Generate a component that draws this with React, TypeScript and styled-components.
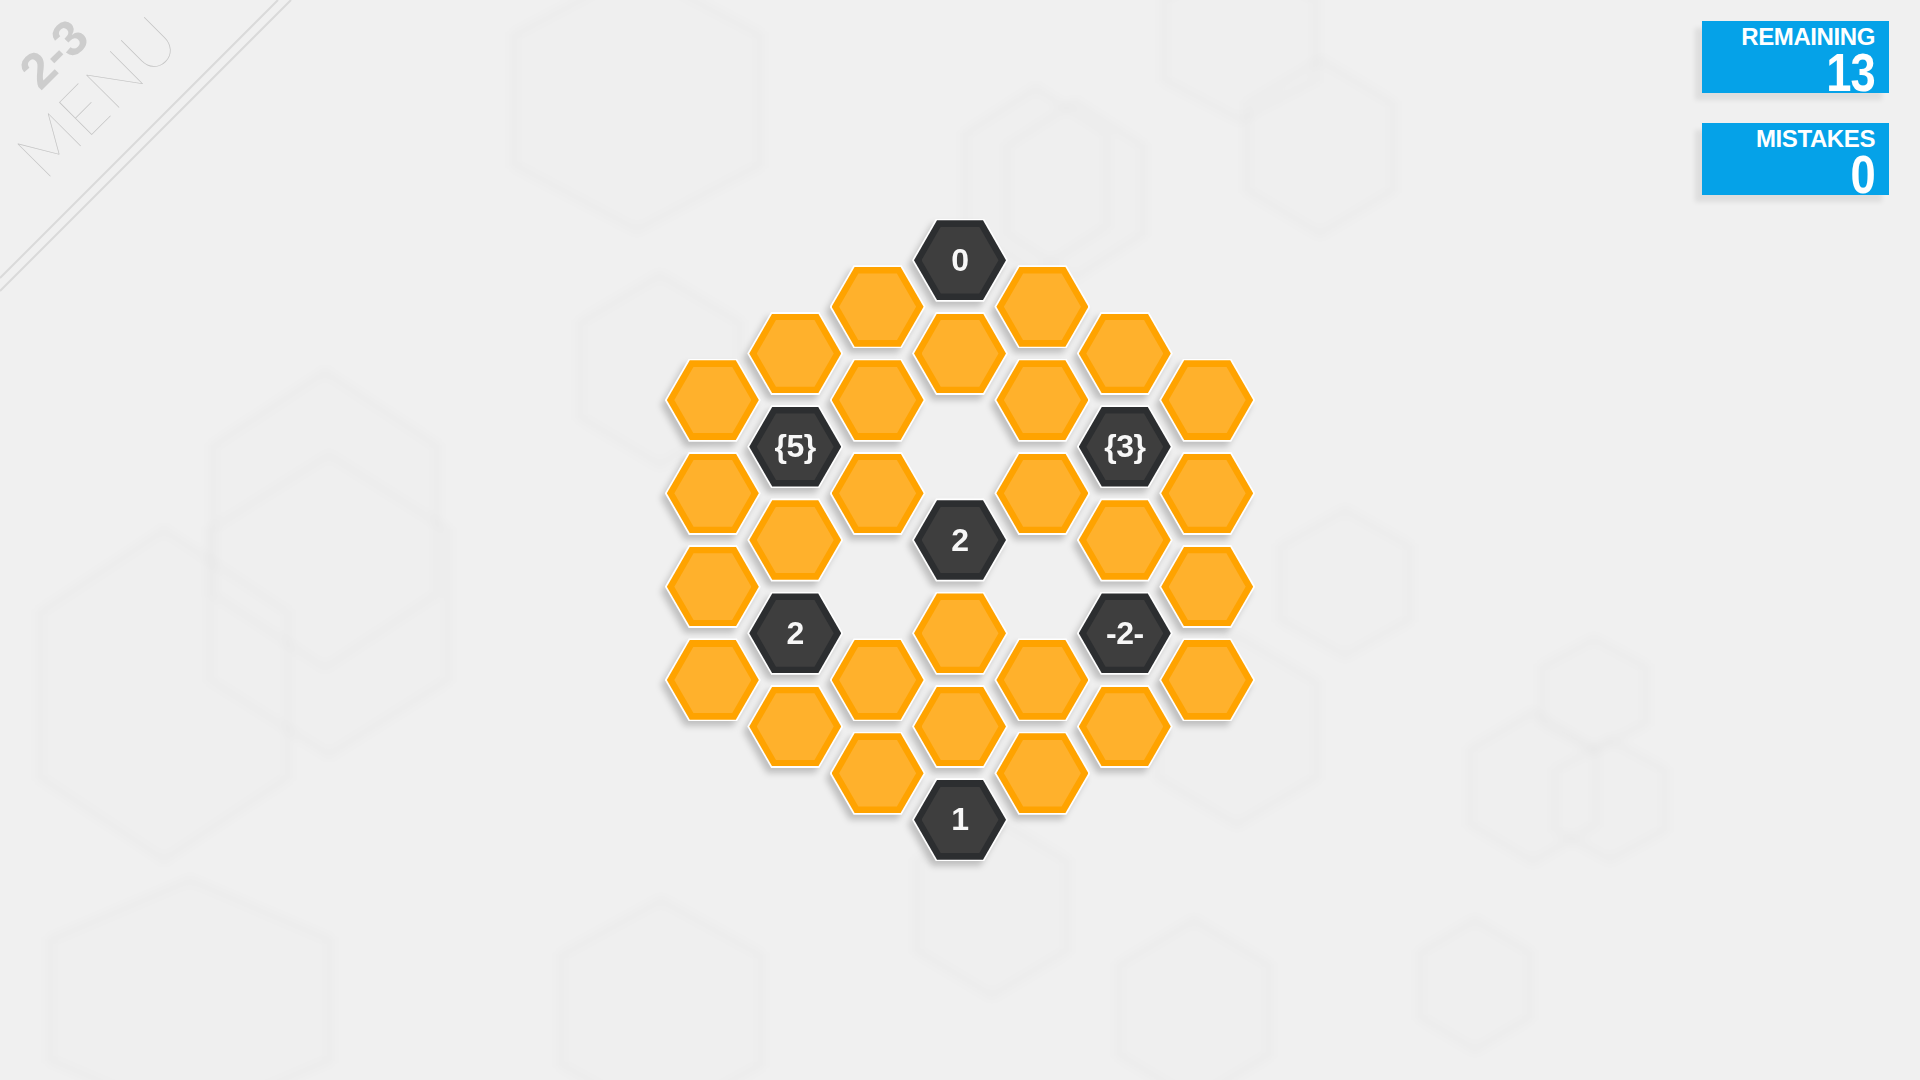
import styled, { createGlobalStyle } from "styled-components";

const GlobalStyle = createGlobalStyle`
  html, body {
    margin: 0;
    padding: 0;
    background: #f0f0f0;
    overflow: hidden;
  }
  body {
    font-family: "Liberation Sans", Arial, sans-serif;
  }
`;

const Page = styled.div`
  position: relative;
  width: 100vw;
  height: 100vh;
  display: flex;
  align-items: center;
  justify-content: center;
  overflow: hidden;
`;

const Backdrop = styled.svg`
  position: absolute;
  inset: 0;
  width: 100%;
  height: 100%;
  pointer-events: none;
`;

const Corner = styled.div`
  position: absolute;
  top: 0;
  left: 0;
  width: 300px;
  height: 300px;
  cursor: pointer;
`;

const CornerLines = styled.svg`
  position: absolute;
  inset: 0;
`;

const CornerLabel = styled.div`
  position: absolute;
  left: 78px;
  top: 78px;
  transform: translate(-50%, -50%) rotate(-45deg);
  display: flex;
  flex-direction: column;
  align-items: center;
  white-space: nowrap;
`;

const Level = styled.div`
  font-family: "Liberation Sans", Arial, sans-serif;
  font-weight: 700;
  font-size: 50px;
  line-height: 48px;
  color: #cdcdcd;
  margin-bottom: 2px;
`;

const MenuText = styled.div`
  font-family: "Lato", "Roboto", "Inter", sans-serif;
  font-weight: 100;
  font-size: 66px;
  line-height: 66px;
  color: #c4c4c4;
`;

const Hud = styled.div`
  position: absolute;
  top: 21px;
  right: 31px;
  display: flex;
  flex-direction: column;
  gap: 30px;
`;

const Counter = styled.div`
  width: 187px;
  height: 72px;
  box-sizing: border-box;
  padding: 4px 14px 0 0;
  background: #05a2e8;
  color: #fff;
  text-align: right;
  box-shadow: -7px 7px 5px rgba(0, 0, 0, 0.08);
`;

const CounterLabel = styled.div`
  font-size: 24px;
  line-height: 24px;
  font-weight: 700;
  letter-spacing: -0.4px;
`;

const CounterValue = styled.div`
  font-size: 54px;
  line-height: 42px;
  font-weight: 700;
  letter-spacing: -1px;
  margin-top: 2px;
  transform: scaleX(0.84);
  transform-origin: right center;
`;

const Board = styled.div`
  position: relative;
  display: grid;
  grid-template-columns: repeat(7, 82.4px);
  grid-template-rows: repeat(14, 46.65px);
`;

const Cell = styled.div<{ $col: number; $row: number }>`
  grid-column: ${(p) => p.$col + 1};
  grid-row: ${(p) => p.$row + 1} / span 2;
  display: flex;
  align-items: center;
  justify-content: center;
`;

const hexClip = "polygon(25% 0, 75% 0, 100% 50%, 75% 100%, 25% 100%, 0 50%)";

const Tile = styled.div`
  flex-shrink: 0;
  filter: drop-shadow(-4px 5px 3px rgba(0, 0, 0, 0.2));
`;

const Edge = styled.div`
  width: 96px;
  height: 83.1px;
  display: flex;
  align-items: center;
  justify-content: center;
  background: #ffffff;
  clip-path: ${hexClip};
`;

const Ring = styled.div<{ $dark: boolean }>`
  width: 92px;
  height: 79.7px;
  display: flex;
  align-items: center;
  justify-content: center;
  background: ${(p) => (p.$dark ? "#2c2e30" : "#ffa300")};
  clip-path: ${hexClip};
`;

const Face = styled.div<{ $dark: boolean }>`
  width: 77px;
  height: 66.7px;
  display: flex;
  align-items: center;
  justify-content: center;
  background: ${(p) => (p.$dark ? "#3e3e3e" : "#ffb12c")};
  clip-path: ${hexClip};
  color: #f7f7f7;
  font-family: "Liberation Sans", Arial, sans-serif;
  font-weight: 700;
  font-size: 32px;
  letter-spacing: -0.5px;
`;

type CellDef = { col: number; row: number; label?: string };

const cells: CellDef[] = [
  { col: 0, row: 3 },
  { col: 0, row: 5 },
  { col: 0, row: 7 },
  { col: 0, row: 9 },
  { col: 1, row: 2 },
  { col: 1, row: 4, label: "{5}" },
  { col: 1, row: 6 },
  { col: 1, row: 8, label: "2" },
  { col: 1, row: 10 },
  { col: 2, row: 1 },
  { col: 2, row: 3 },
  { col: 2, row: 5 },
  { col: 2, row: 9 },
  { col: 2, row: 11 },
  { col: 3, row: 0, label: "0" },
  { col: 3, row: 2 },
  { col: 3, row: 6, label: "2" },
  { col: 3, row: 8 },
  { col: 3, row: 10 },
  { col: 3, row: 12, label: "1" },
  { col: 4, row: 1 },
  { col: 4, row: 3 },
  { col: 4, row: 5 },
  { col: 4, row: 9 },
  { col: 4, row: 11 },
  { col: 5, row: 2 },
  { col: 5, row: 4, label: "{3}" },
  { col: 5, row: 6 },
  { col: 5, row: 8, label: "-2-" },
  { col: 5, row: 10 },
  { col: 6, row: 3 },
  { col: 6, row: 5 },
  { col: 6, row: 7 },
  { col: 6, row: 9 },
];

// faint outlines in the background: centre x, centre y, half width, half height
const ghosts: [number, number, number, number][] = [
  [164, 695, 124, 165],
  [329, 605, 119, 150],
  [325, 520, 112, 148],
  [637, 100, 123, 130],
  [660, 370, 80, 95],
  [1036, 180, 71, 92],
  [1075, 190, 68, 88],
  [1240, 40, 76, 80],
  [1320, 147, 73, 87],
  [1345, 583, 65, 73],
  [1237, 730, 80, 95],
  [1533, 787, 63, 75],
  [1594, 695, 52, 56],
  [1610, 800, 55, 60],
  [661, 1010, 100, 110],
  [992, 906, 75, 90],
  [1194, 1010, 75, 90],
  [1475, 985, 55, 65],
  [190, 1000, 140, 120],
];

const ghostPoints = (cx: number, cy: number, w: number, h: number) =>
  [
    [cx, cy - h],
    [cx + w, cy - h / 2],
    [cx + w, cy + h / 2],
    [cx, cy + h],
    [cx - w, cy + h / 2],
    [cx - w, cy - h / 2],
  ]
    .map((p) => p.join(","))
    .join(" ");

function App() {
  return (
    <>
      <GlobalStyle />
      <Page>
        <Backdrop viewBox="0 0 1920 1080" preserveAspectRatio="none">
          <defs>
            <filter id="soft" x="-20%" y="-20%" width="140%" height="140%">
              <feGaussianBlur stdDeviation="4" />
            </filter>
          </defs>
          <g filter="url(#soft)">
            {ghosts.map(([cx, cy, w, h], i) => (
              <polygon
                key={i}
                points={ghostPoints(cx, cy, w, h)}
                fill="rgba(0,0,0,0.004)"
                stroke="rgba(0,0,0,0.014)"
                strokeWidth={8}
              />
            ))}
          </g>
        </Backdrop>

        <Corner>
          <CornerLines width="300" height="300">
            <line x1="0" y1="278" x2="278" y2="0" stroke="#dadada" strokeWidth="2" />
            <line x1="0" y1="291" x2="291" y2="0" stroke="#dadada" strokeWidth="2" />
          </CornerLines>
          <CornerLabel>
            <Level>2-3</Level>
            <MenuText>MENU</MenuText>
          </CornerLabel>
        </Corner>

        <Hud>
          <Counter>
            <CounterLabel>REMAINING</CounterLabel>
            <CounterValue>13</CounterValue>
          </Counter>
          <Counter>
            <CounterLabel>MISTAKES</CounterLabel>
            <CounterValue>0</CounterValue>
          </Counter>
        </Hud>

        <Board>
          {cells.map((c) => {
            const dark = c.label !== undefined;
            return (
              <Cell key={`${c.col}-${c.row}`} $col={c.col} $row={c.row}>
                <Tile>
                  <Edge>
                    <Ring $dark={dark}>
                      <Face $dark={dark}>{c.label}</Face>
                    </Ring>
                  </Edge>
                </Tile>
              </Cell>
            );
          })}
        </Board>
      </Page>
    </>
  );
}

export default App;
